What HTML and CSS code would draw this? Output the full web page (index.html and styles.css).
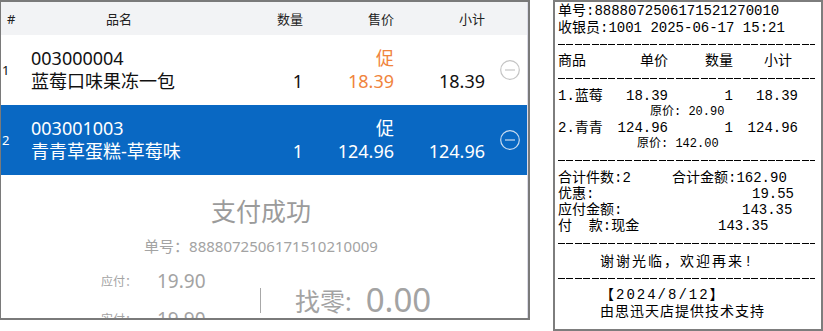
FILE: index.html
```html
<!DOCTYPE html>
<html lang="zh-CN">
<head>
    <meta charset="UTF-8">
    <meta name="viewport" content="width=device-width, initial-scale=1.0">
    <title>收银</title>
    <link rel="stylesheet" href="styles.css">
</head>
<body>
    <div class="page">
        <section class="pos">
            <div class="list">
                <div class="grid head">
                    <span class="idx">#</span>
                    <span class="name">品名</span>
                    <span class="num">数量</span>
                    <span class="num">售价</span>
                    <span class="num">小计</span>
                    <span></span>
                </div>

                <div class="grid row">
                    <div class="cell idx">1</div>
                    <div class="cell">
                        <span>003000004</span>
                        <span>蓝莓口味果冻一包</span>
                    </div>
                    <div class="cell num">
                        <span>&nbsp;</span>
                        <span>1</span>
                    </div>
                    <div class="cell num promo">
                        <span>促</span>
                        <span>18.39</span>
                    </div>
                    <div class="cell num">
                        <span>&nbsp;</span>
                        <span>18.39</span>
                    </div>
                    <div class="cell del">
                        <svg width="20" height="20" viewBox="0 0 20 20"><circle cx="10" cy="10" r="9.3" fill="none"/><line x1="5" y1="10" x2="15" y2="10"/></svg>
                    </div>
                </div>

                <div class="grid row on">
                    <div class="cell idx">2</div>
                    <div class="cell">
                        <span>003001003</span>
                        <span>青青草蛋糕-草莓味</span>
                    </div>
                    <div class="cell num">
                        <span>&nbsp;</span>
                        <span>1</span>
                    </div>
                    <div class="cell num promo">
                        <span>促</span>
                        <span>124.96</span>
                    </div>
                    <div class="cell num">
                        <span>&nbsp;</span>
                        <span>124.96</span>
                    </div>
                    <div class="cell del">
                        <svg width="20" height="20" viewBox="0 0 20 20"><circle cx="10" cy="10" r="9.3" fill="none"/><line x1="5" y1="10" x2="15" y2="10"/></svg>
                    </div>
                </div>

                <div class="pay">
                    <div class="pay-title">支付成功</div>
                    <div class="pay-no">单号：8888072506171510210009</div>
                    <div class="pay-bottom">
                        <div class="pay-left">
                            <div class="due"><span class="due-label">应付：</span><span class="due-val">19.90</span></div>
                            <div class="due"><span class="due-label">实付：</span><span class="due-val">19.90</span></div>
                        </div>
                        <div class="divider"></div>
                        <div class="change">
                            <span class="change-label">找零:</span>
                            <span class="change-val">0.00</span>
                        </div>
                    </div>
                </div>
            </div>
        </section>

        <section class="ticket">
            <div class="t-line">单号:8888072506171521270010</div>
            <div class="t-line">收银员:1001 2025-06-17 15:21</div>
            <div class="dash"></div>
            <div class="t-grid t-head">
                <span>商品</span>
                <span class="r">单价</span>
                <span class="r">数量</span>
                <span class="r last">小计</span>
            </div>
            <div class="dash tall"></div>
            <div class="t-grid">
                <span>1.蓝莓</span>
                <span class="r">18.39</span>
                <span class="r">1</span>
                <span class="r">18.39</span>
            </div>
            <div class="orig">原价: 20.90</div>
            <div class="t-grid">
                <span>2.青青</span>
                <span class="r">124.96</span>
                <span class="r">1</span>
                <span class="r">124.96</span>
            </div>
            <div class="orig wide">原价: 142.00</div>
            <div class="dash tall"></div>
            <div class="kv"><span class="k">合计件数:2</span><span>合计金额:162.90</span></div>
            <div class="kv"><span class="k k-off">优惠:</span><span>19.55</span></div>
            <div class="kv"><span class="k k-due">应付金额:</span><span>143.35</span></div>
            <div class="kv"><span class="k k-cash">付  款:现金</span><span>143.35</span></div>
            <div class="dash xl"></div>
            <div class="t-line center loose">谢谢光临，欢迎再来!</div>
            <div class="dash"></div>
            <div class="t-line center loose">【2024/8/12】</div>
            <div class="t-line center spaced">由思迅天店提供技术支持</div>
        </section>
    </div>
</body>
</html>
```

FILE: styles.css
```css
*, *::before, *::after {
	box-sizing: border-box;
}

body {
	margin: 0;
	background: #fff;
	font-family: "Noto Sans", "Noto Sans CJK SC", sans-serif;
	color: #111;
}

.page {
	display: flex;
	gap: 23px;
	width: 823px;
	height: 331px;
}

/* left: cart + payment */

.pos {
	width: 530px;
	height: 320px;
	border: 2px solid #7a7a7a;
	border-left-width: 1px;
	overflow: hidden;
}

.list {
	height: 100%;
	border-right: 1px solid #dcdce8;
}

.grid {
	display: grid;
	grid-template-columns: 24px 188px 90px 91px 91px 1fr;
}

.head {
	height: 33px;
	align-items: center;
	background: #f2f3f5;
	font-size: 13px;
	color: #222;
}

.head .idx {
	padding-left: 6px;
}

.head .name {
	text-align: center;
}

.num {
	text-align: right;
}

.row {
	height: 70px;
	font-size: 18px;
	line-height: 23px;
	background: #fff;
}

.row.on {
	background: #0968c3;
	color: #fff;
}

.cell {
	display: flex;
	flex-direction: column;
	justify-content: center;
	padding-left: 6px;
}

.cell.num {
	padding-left: 0;
	align-items: flex-end;
}

.cell.idx {
	padding-left: 1px;
	font-size: 13px;
}

.promo {
	color: #f0843c;
}

.row.on .promo {
	color: #fff;
}

.del {
	padding-left: 15px;
}

.del svg {
	stroke: #c4c4c4;
	stroke-width: 1.2;
}

.row.on .del svg {
	stroke: #c9dbf0;
}

.pay {
	padding-top: 19px;
	padding-right: 6px;
	text-align: center;
	color: #a3a3a3;
}

.pay-title {
	font-size: 25px;
	line-height: 34px;
	color: #9b9b9b;
}

.pay-no {
	margin-top: 8px;
	font-size: 15px;
	line-height: 20px;
}

.pay-bottom {
	display: flex;
	align-items: center;
	margin-top: 6px;
	padding-left: 100px;
	text-align: left;
}

.pay-left {
	width: 159px;
}

.due {
	display: flex;
	align-items: center;
	height: 38px;
}

.due-label {
	width: 56px;
	font-size: 12px;
}

.due-val {
	font-size: 19px;
}

.divider {
	width: 1px;
	height: 25px;
	background: #a8a8a8;
}

.change {
	display: flex;
	align-items: center;
	gap: 14px;
	padding-left: 34px;
}

.change-label {
	font-size: 25px;
}

.change-val {
	font-size: 33px;
	line-height: 40px;
}

/* right: printed receipt */

.ticket {
	width: 270px;
	height: 331px;
	border: 2px solid #7d7d7d;
	padding: 1px 6px 0 3px;
	font-family: "Liberation Mono", "Noto Sans CJK SC", monospace;
	font-size: 14px;
	line-height: 17px;
	color: #000;
}

.dash {
	height: 1px;
	margin: 7px 0 8px;
	background: repeating-linear-gradient(90deg, #000 0 7px, transparent 7px 8.4px);
}

.dash.tall {
	margin: 8px 0 9px;
}

.dash.xl {
	margin: 9px 0 10px;
}

.t-grid {
	display: grid;
	grid-template-columns: 52px 58px 65px 65px;
}

.t-grid .r {
	text-align: right;
}

.t-head .last {
	padding-right: 6px;
}

.orig {
	padding-left: 92px;
	font-size: 12px;
	line-height: 15px;
}

.orig.wide {
	padding-left: 79px;
}

.kv {
	display: flex;
	line-height: 16px;
}

.k {
	width: 114px;
}

.k-off {
	width: 194px;
}

.k-due {
	width: 184px;
}

.k-cash {
	width: 160px;
	white-space: pre;
}

.center {
	padding-left: 42px;
}

.loose {
	letter-spacing: 2px;
}

.spaced {
	letter-spacing: 1px;
}
```
